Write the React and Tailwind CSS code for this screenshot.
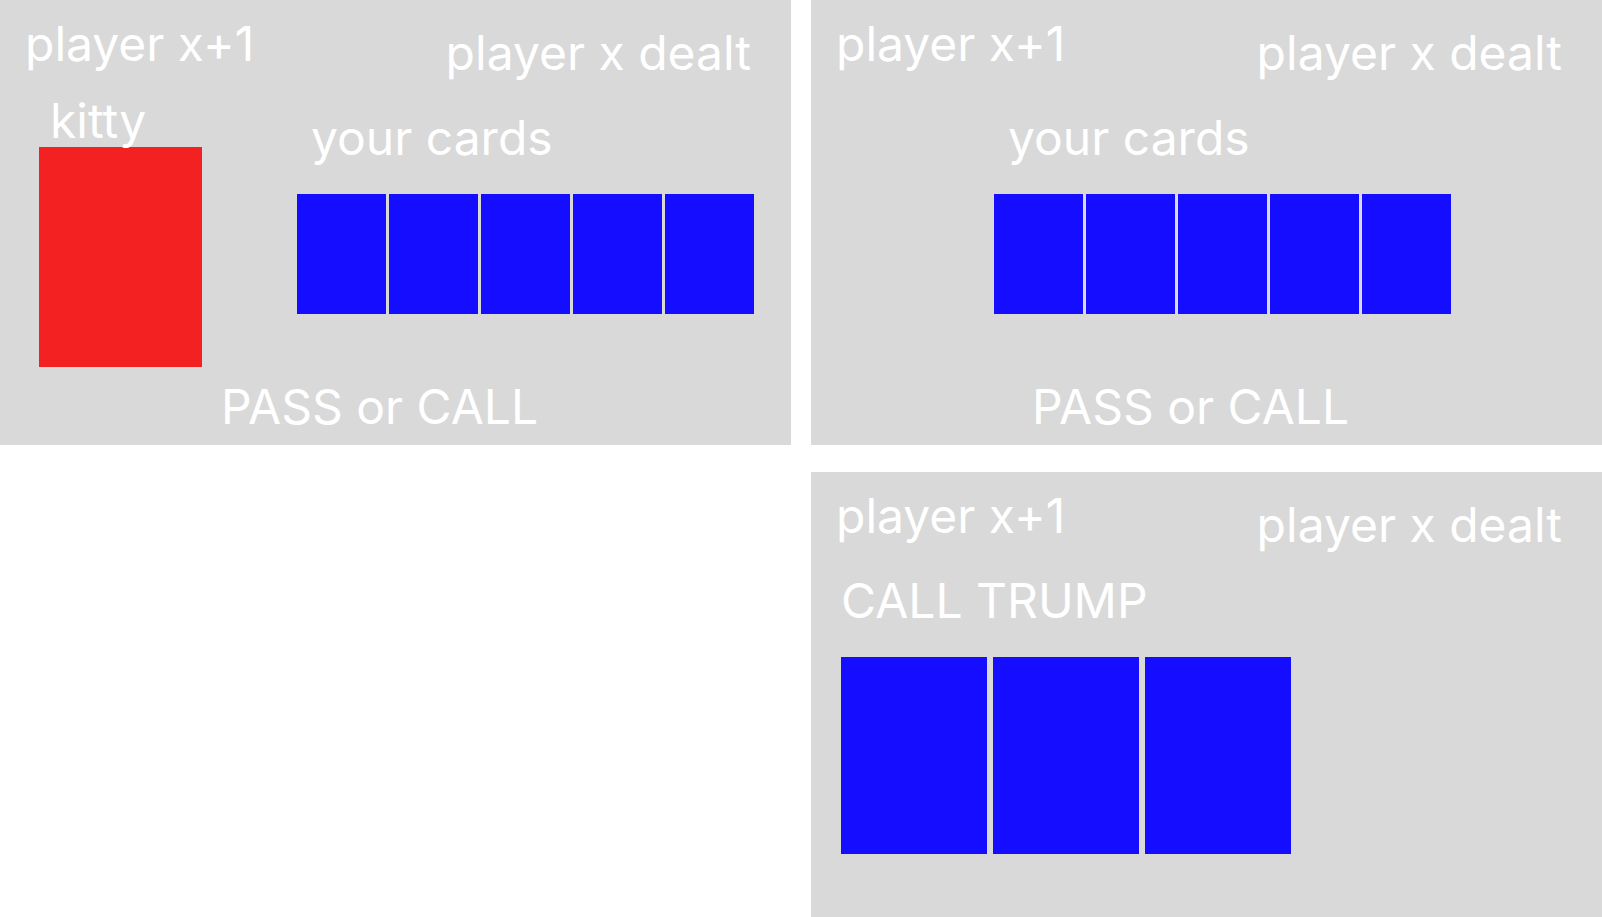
function Panel({ className = "", children }) {
  return (
    <section className={`flex flex-col bg-[#d9d9d9] pt-[18px] pb-3 ${className}`}>
      <header className="flex items-start justify-between pr-10 pl-[25px]">
        <h2>player x+1</h2>
        <p className="mt-[9px]">player x dealt</p>
      </header>
      {children}
    </section>
  );
}

function Hand() {
  return (
    <div className="flex flex-col gap-[30px]">
      <h3 className="pl-[14px]">your cards</h3>
      <ul className="flex gap-[3px]" aria-label="your cards">
        {[1, 2, 3, 4, 5].map((card) => (
          <li key={card} className="h-[120px] w-[89px] bg-[#140dff]" />
        ))}
      </ul>
    </div>
  );
}

function Bid() {
  return (
    <p className="mt-auto pr-8 text-center">
      <button type="button" className="cursor-pointer">PASS</button> or{" "}
      <button type="button" className="cursor-pointer">CALL</button>
    </p>
  );
}

export default function App() {
  return (
    <main className="grid min-h-screen auto-rows-fr grid-cols-2 gap-x-5 gap-y-[27px] bg-white font-['Inter',sans-serif] text-5xl leading-[52px] whitespace-nowrap text-white">
      <Panel>
        <div className="mt-4 flex items-start justify-between pr-[37px] pl-[39px]">
          <div className="flex flex-col">
            <h3 className="relative pl-[11px]">kitty</h3>
            <div className="h-[220px] w-[163px] bg-[#f32121]" />
          </div>
          <div className="pt-[17px]">
            <Hand />
          </div>
        </div>
        <Bid />
      </Panel>

      <Panel>
        <div className="mt-[33px] flex justify-center pl-8">
          <Hand />
        </div>
        <Bid />
      </Panel>

      <Panel className="col-start-2">
        <div className="mt-6 flex flex-col gap-[30px] px-[30px]">
          <h3>CALL TRUMP</h3>
          <ul className="flex gap-[6px]" aria-label="trump choices">
            {[1, 2, 3].map((card) => (
              <li key={card} className="h-[197px] w-[146px] bg-[#140dff]" />
            ))}
          </ul>
        </div>
      </Panel>
    </main>
  );
}
